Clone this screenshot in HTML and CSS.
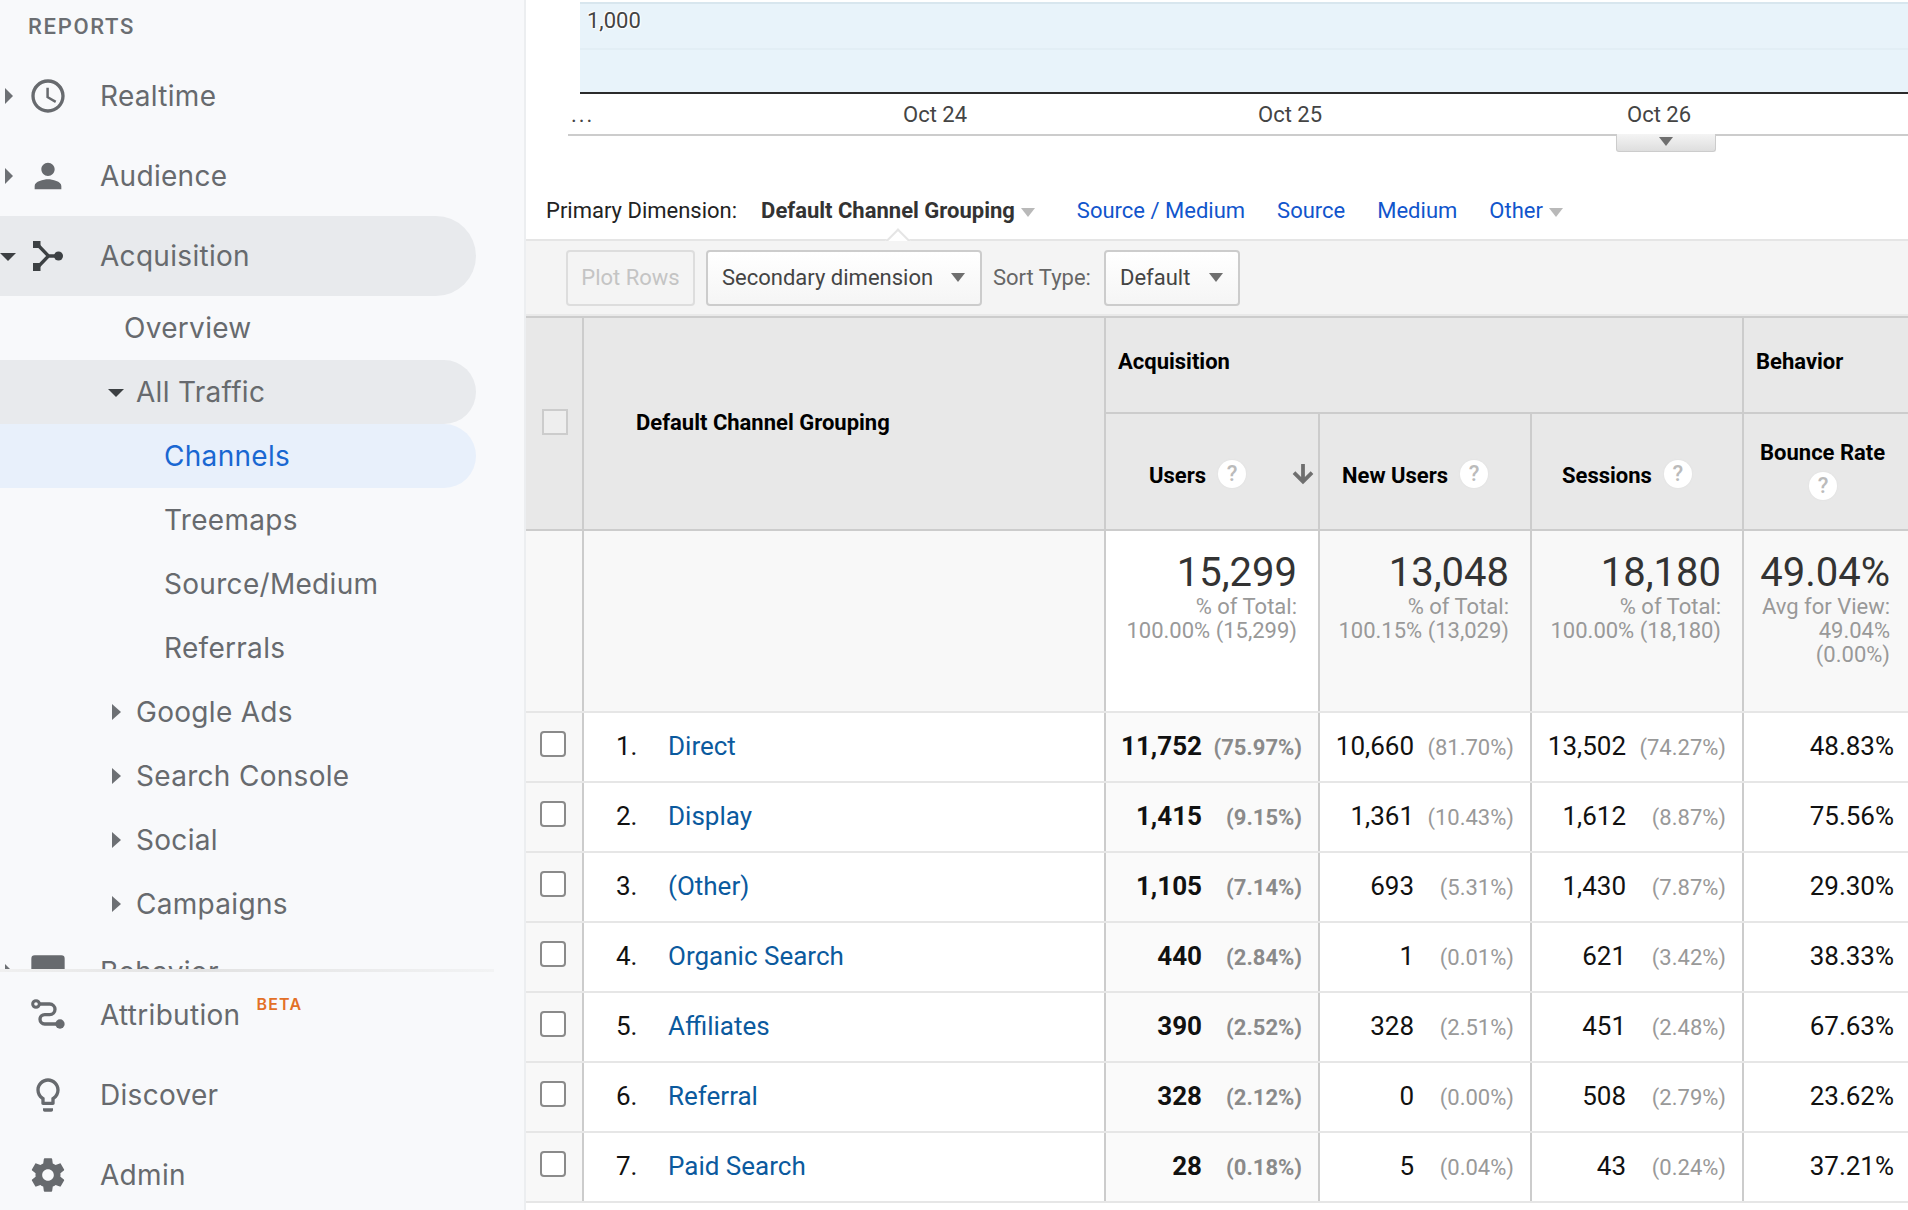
FILE: index.html
```html
<!DOCTYPE html>
<html lang="en">

<head>
    <meta charset="UTF-8">
    <title>Channels - Analytics</title>
    <link rel="stylesheet" href="styles.css">
</head>

<body>
    <aside class="sidebar">
        <nav class="nav-scroll">
            <div class="nav-title">REPORTS</div>
            <a class="nav-item"><i class="caret-right"></i>
                <svg class="nav-icon" viewBox="0 0 24 24"><path d="M11.99 2C6.47 2 2 6.48 2 12s4.47 10 9.99 10C17.52 22 22 17.52 22 12S17.52 2 11.99 2zM12 20c-4.42 0-8-3.58-8-8s3.58-8 8-8 8 3.58 8 8-3.58 8-8 8zm.5-13H11v6l5.25 3.15.75-1.23-4.5-2.67z"/></svg>
                Realtime</a>
            <a class="nav-item"><i class="caret-right"></i>
                <svg class="nav-icon" viewBox="0 0 24 24"><path d="M12 12c2.21 0 4-1.79 4-4s-1.79-4-4-4-4 1.79-4 4 1.79 4 4 4zm0 2c-2.67 0-8 1.34-8 4v2h16v-2c0-2.66-5.33-4-8-4z"/></svg>
                Audience</a>
            <a class="nav-item pill"><i class="caret-down top"></i>
                <svg class="nav-icon dark" viewBox="0 0 24 24"><path d="M3 3h4.500v4.200H3zM3 16.200h4.500V21H3z"/><path fill="none" stroke="currentColor" stroke-width="2" d="M6.500 6l5.800 6-5.800 6M12 12h5"/><circle cx="18.300" cy="12" r="2.700"/></svg>
                Acquisition</a>
            <a class="sub-item lvl-1">Overview</a>
            <a class="sub-item lvl-2 pill"><i class="caret-down"></i>All Traffic</a>
            <a class="sub-item lvl-3 active">Channels</a>
            <a class="sub-item lvl-3">Treemaps</a>
            <a class="sub-item lvl-3">Source/Medium</a>
            <a class="sub-item lvl-3">Referrals</a>
            <a class="sub-item lvl-2"><i class="caret-small"></i>Google Ads</a>
            <a class="sub-item lvl-2"><i class="caret-small"></i>Search Console</a>
            <a class="sub-item lvl-2"><i class="caret-small"></i>Social</a>
            <a class="sub-item lvl-2"><i class="caret-small"></i>Campaigns</a>
            <a class="nav-item behavior"><i class="caret-right"></i>
                <svg class="nav-icon" viewBox="0 0 24 24"><path d="M4 2h16a2 2 0 0 1 2 2v16a2 2 0 0 1-2 2H4a2 2 0 0 1-2-2V4a2 2 0 0 1 2-2z"/></svg>
                Behavior</a>
        </nav>
        <div class="nav-bottom">
            <a class="nav-item bottom">
                <svg class="nav-icon" viewBox="0 0 24 24"><path fill="none" stroke="currentColor" stroke-width="2" d="M6.500 5.400H13a3.200 3.200 0 0 1 0 6.400h-3a2.800 2.800 0 0 0 0 5.600h7"/><circle cx="4.800" cy="5.400" r="2" fill="#f8f9fb" stroke="currentColor" stroke-width="1.800"/><circle cx="19.200" cy="17.400" r="2.800"/></svg>
                Attribution<span class="beta">BETA</span></a>
            <a class="nav-item bottom">
                <svg class="nav-icon" viewBox="0 0 24 24"><path d="M9 21c0 .55.45 1 1 1h4c.55 0 1-.45 1-1v-1H9v1zm3-19C8.140 2 5 5.140 5 9c0 2.380 1.190 4.470 3 5.740V17c0 .55.450 1 1 1h6c.550 0 1-.450 1-1v-2.260c1.810-1.270 3-3.360 3-5.740 0-3.860-3.140-7-7-7zm2.850 11.100l-.850.600V16h-4v-2.300l-.850-.600C7.800 12.160 7 10.630 7 9c0-2.760 2.240-5 5-5s5 2.240 5 5c0 1.630-.800 3.160-2.150 4.100z"/></svg>
                Discover</a>
            <a class="nav-item bottom">
                <svg class="nav-icon" viewBox="0 0 24 24"><path d="M19.430 12.980c.04-.32.07-.64.07-.98s-.03-.66-.07-.98l2.110-1.650c.19-.15.24-.42.12-.64l-2-3.460c-.12-.22-.39-.30-.61-.22l-2.490 1c-.52-.40-1.080-.73-1.690-.98l-.38-2.650C14.460 2.180 14.250 2 14 2h-4c-.25 0-.46.180-.49.420l-.38 2.650c-.61.250-1.170.590-1.690.98l-2.490-1c-.23-.09-.49 0-.61.220l-2 3.460c-.13.220-.07.490.12.640l2.110 1.650c-.04.320-.07.650-.07.980s.03.660.07.980l-2.110 1.650c-.19.150-.24.420-.12.640l2 3.460c.12.220.39.300.61.220l2.490-1c.52.400 1.080.730 1.690.980l.38 2.650c.03.240.24.420.49.420h4c.25 0 .46-.180.49-.420l.38-2.650c.61-.250 1.170-.590 1.690-.980l2.490 1c.23.090.49 0 .61-.220l2-3.460c.12-.220.070-.490-.12-.640l-2.110-1.650zM12 15.500c-1.930 0-3.500-1.570-3.500-3.500s1.570-3.500 3.500-3.500 3.500 1.570 3.500 3.500-1.570 3.500-3.500 3.500z"/></svg>
                Admin</a>
        </div>
    </aside>

    <main class="main">
        <div class="chart">
            <div class="plot">
                <div class="plot-grid"></div>
                <span class="y-label">1,000</span>
            </div>
            <div class="x-axis">
                <span class="x-more">...</span>
                <span class="x-label oct24">Oct 24</span>
                <span class="x-label oct25">Oct 25</span>
                <span class="x-label oct26">Oct 26</span>
                <div class="chart-handle"><i class="tri"></i></div>
            </div>
        </div>

        <div class="tabs">
            <span class="tabs-label">Primary Dimension:</span>
            <span class="tab-current">Default Channel Grouping<i class="tri light"></i></span>
            <a class="tab-link">Source / Medium</a>
            <a class="tab-link">Source</a>
            <a class="tab-link">Medium</a>
            <a class="tab-link">Other<i class="tri light"></i></a>
        </div>

        <div class="toolbar">
            <button class="btn plot-rows">Plot Rows</button>
            <button class="btn secondary">Secondary dimension<i class="tri"></i></button>
            <span class="sort-label">Sort Type:</span>
            <button class="btn sort">Default<i class="tri"></i></button>
        </div>

        <table class="report">
            <colgroup>
                <col class="c-check">
                <col class="c-name">
                <col class="c-users">
                <col class="c-new">
                <col class="c-sessions">
                <col class="c-bounce">
            </colgroup>
            <thead>
                <tr class="head-1">
                    <th rowspan="2" class="check-cell"><span class="check head-check"></span></th>
                    <th rowspan="2" class="name-head">Default Channel Grouping</th>
                    <th colspan="3" class="group-head">Acquisition</th>
                    <th class="group-head">Behavior</th>
                </tr>
                <tr class="head-2">
                    <th class="metric users-head">Users<span class="help">?</span>
                        <svg class="sort-arrow" viewBox="0 0 24 24"><path d="M20 12l-1.410-1.410L13 16.170V4h-2v12.170l-5.580-5.590L4 12l8 8 8-8z"/></svg>
                    </th>
                    <th class="metric new-head">New Users<span class="help">?</span></th>
                    <th class="metric sessions-head">Sessions<span class="help">?</span></th>
                    <th class="metric bounce-head">Bounce Rate<span class="help">?</span></th>
                </tr>
            </thead>
            <tbody>
                <tr class="summary">
                    <td class="shade"></td>
                    <td class="shade"></td>
                    <td><b>15,299</b>% of Total:<br>100.00% (15,299)</td>
                    <td class="shade"><b>13,048</b>% of Total:<br>100.15% (13,029)</td>
                    <td class="shade"><b>18,180</b>% of Total:<br>100.00% (18,180)</td>
                    <td class="shade bounce-sum"><b>49.04%</b>Avg for View:<br>49.04%<br>(0.00%)</td>
                </tr>
                <tr class="row">
                    <td class="shade check-cell"><span class="check"></span></td>
                    <td class="name"><span class="num">1.</span><a>Direct</a></td>
                    <td class="val main-val shade-soft"><span>11,752</span><em>(75.97%)</em></td>
                    <td class="val"><span>10,660</span><em>(81.70%)</em></td>
                    <td class="val"><span>13,502</span><em>(74.27%)</em></td>
                    <td class="val rate">48.83%</td>
                </tr>
                <tr class="row">
                    <td class="shade check-cell"><span class="check"></span></td>
                    <td class="name"><span class="num">2.</span><a>Display</a></td>
                    <td class="val main-val shade-soft"><span>1,415</span><em>(9.15%)</em></td>
                    <td class="val"><span>1,361</span><em>(10.43%)</em></td>
                    <td class="val"><span>1,612</span><em>(8.87%)</em></td>
                    <td class="val rate">75.56%</td>
                </tr>
                <tr class="row">
                    <td class="shade check-cell"><span class="check"></span></td>
                    <td class="name"><span class="num">3.</span><a>(Other)</a></td>
                    <td class="val main-val shade-soft"><span>1,105</span><em>(7.14%)</em></td>
                    <td class="val"><span>693</span><em>(5.31%)</em></td>
                    <td class="val"><span>1,430</span><em>(7.87%)</em></td>
                    <td class="val rate">29.30%</td>
                </tr>
                <tr class="row">
                    <td class="shade check-cell"><span class="check"></span></td>
                    <td class="name"><span class="num">4.</span><a>Organic Search</a></td>
                    <td class="val main-val shade-soft"><span>440</span><em>(2.84%)</em></td>
                    <td class="val"><span>1</span><em>(0.01%)</em></td>
                    <td class="val"><span>621</span><em>(3.42%)</em></td>
                    <td class="val rate">38.33%</td>
                </tr>
                <tr class="row">
                    <td class="shade check-cell"><span class="check"></span></td>
                    <td class="name"><span class="num">5.</span><a>Affiliates</a></td>
                    <td class="val main-val shade-soft"><span>390</span><em>(2.52%)</em></td>
                    <td class="val"><span>328</span><em>(2.51%)</em></td>
                    <td class="val"><span>451</span><em>(2.48%)</em></td>
                    <td class="val rate">67.63%</td>
                </tr>
                <tr class="row">
                    <td class="shade check-cell"><span class="check"></span></td>
                    <td class="name"><span class="num">6.</span><a>Referral</a></td>
                    <td class="val main-val shade-soft"><span>328</span><em>(2.12%)</em></td>
                    <td class="val"><span>0</span><em>(0.00%)</em></td>
                    <td class="val"><span>508</span><em>(2.79%)</em></td>
                    <td class="val rate">23.62%</td>
                </tr>
                <tr class="row">
                    <td class="shade check-cell"><span class="check"></span></td>
                    <td class="name"><span class="num">7.</span><a>Paid Search</a></td>
                    <td class="val main-val shade-soft"><span>28</span><em>(0.18%)</em></td>
                    <td class="val"><span>5</span><em>(0.04%)</em></td>
                    <td class="val"><span>43</span><em>(0.24%)</em></td>
                    <td class="val rate">37.21%</td>
                </tr>
            </tbody>
        </table>
    </main>
</body>

</html>
```

FILE: styles.css
```css
* {
    padding: 0;
    margin: 0;
    box-sizing: border-box;
}

html,
body {
    height: 100%;
    overflow: hidden;
}

body {
    display: flex;
    height: 1210px;
    background: #fff;
    font-family: Roboto, "Liberation Sans", sans-serif;
    font-size: 22px;
    color: #333;
}

/* sidebar */
.sidebar {
    flex: 0 0 526px;
    height: 1210px;
    background: #f8f9fb;
    border-right: 2px solid #eceef0;
    font-family: Inter, Roboto, sans-serif;
    color: #676a6e;
}

.nav-scroll {
    height: 970px;
    overflow: hidden;
    padding-right: 48px;
}

.nav-title {
    height: 56px;
    padding: 13px 0 0 28px;
    font-size: 22px;
    line-height: 28px;
    font-weight: 500;
    letter-spacing: 1.7px;
    font-family: Roboto, sans-serif;
    color: #6b6e72;
}

.nav-item {
    position: relative;
    display: flex;
    align-items: center;
    height: 80px;
    padding-left: 28px;
    font-size: 28px;
    letter-spacing: 0.3px;
}

.nav-icon {
    flex: 0 0 40px;
    width: 40px;
    height: 40px;
    margin-right: 32px;
    fill: currentColor;
}

.nav-icon.dark {
    color: #3c4043;
}

.pill {
    border-radius: 0 40px 40px 0;
    background: #e8eaed;
}

.behavior {
    margin-top: -4px;
}

.sub-item {
    display: flex;
    align-items: center;
    height: 64px;
    font-size: 28px;
    letter-spacing: 0.3px;
}

.lvl-1 {
    padding-left: 124px;
}

.lvl-2 {
    padding-left: 136px;
    position: relative;
}

.lvl-3 {
    padding-left: 164px;
}

.active {
    background: #e8f0fb;
    color: #1967d2;
    border-radius: 0 32px 32px 0;
}

.caret-right,
.caret-small,
.caret-down {
    position: absolute;
    width: 0;
    height: 0;
    border-style: solid;
    border-color: transparent;
}

.caret-right {
    left: 5px;
    top: 32px;
    border-width: 8px 0 8px 8px;
    border-left-color: #6d7074;
}

.caret-small {
    left: 112px;
    top: 24px;
    border-width: 8px 0 8px 9px;
    border-left-color: #6d7074;
}

.caret-down {
    left: 108px;
    top: 29px;
    border-width: 8px 8px 0 8px;
    border-top-color: #3c4043;
}

.caret-down.top {
    left: 0;
    top: 37px;
}

.nav-bottom {
    position: relative;
    height: 240px;
    padding-top: 5px;
}

/* soft edge above the pinned items */
.nav-bottom::before {
    content: "";
    position: absolute;
    left: 0;
    top: -1px;
    width: 494px;
    height: 3px;
    background: linear-gradient(to right, #f0f0f0, #e2e2e2 40%, #f2f3f4);
}

.nav-bottom .nav-item {
    height: 80px;
}

.beta {
    align-self: flex-start;
    margin: 19px 0 0 16px;
    font-size: 16px;
    font-weight: 600;
    letter-spacing: 1.2px;
    color: #e37027;
    font-family: Inter, sans-serif;
}

/* main column */
.main {
    flex: 1;
    min-width: 0;
    overflow: hidden;
}

.chart {
    height: 136px;
    padding-left: 54px;
}

.plot {
    position: relative;
    height: 94px;
    padding-top: 2px;
    border-bottom: 2px solid #2b2b2b;
}

.plot-grid {
    height: 90px;
    background: linear-gradient(#e8f3fa 0, #e8f3fa 44px, #e2eef5 44px, #e2eef5 46px, #e8f3fa 46px);
    border-top: 2px solid #d8e6ee;
}

.y-label {
    position: absolute;
    left: 7px;
    top: 8px;
    font-size: 22px;
    line-height: 26px;
    color: #444;
    text-shadow: 0 0 2px #fff, 0 0 2px #fff, 0 0 3px #fff, 1px 1px 1px #fff, -1px -1px 1px #fff;
}

.x-axis {
    position: relative;
    height: 42px;
    margin-left: -12px;
    border-bottom: 2px solid #ccc;
}

.x-more,
.x-label {
    position: absolute;
    top: 7px;
    line-height: 28px;
    color: #444;
}

.x-more {
    left: 3px;
    letter-spacing: 2px;
}

.oct24 {
    left: 335px;
}

.oct25 {
    left: 690px;
}

.oct26 {
    left: 1059px;
}

.chart-handle {
    position: absolute;
    left: 1048px;
    top: 40px;
    width: 100px;
    height: 18px;
    border: 1px solid #ccc;
    border-top: 0;
    border-radius: 0 0 3px 3px;
    background: linear-gradient(#f4f4f4, #dedede);
    text-align: center;
    line-height: 10px;
}

.tri {
    display: inline-block;
    width: 0;
    height: 0;
    border-style: solid;
    border-width: 9px 7.5px 0 7.5px;
    border-color: #6f6f6f transparent transparent transparent;
}

.tri.light {
    border-top-color: #b9b9b9;
    margin-left: 6px;
    vertical-align: 1px;
}

.tabs {
    position: relative;
    display: flex;
    align-items: center;
    height: 105px;
    padding: 46px 0 0 20px;
    border-bottom: 2px solid #e5e5e5;
}

.tabs-label {
    color: #222;
    margin-right: 24px;
}

.tab-current {
    position: relative;
    font-weight: 700;
    color: #333;
    margin-right: 42px;
}

/* notch under the current tab */
.tab-current::after {
    content: "";
    position: absolute;
    left: 128px;
    top: 34px;
    width: 16px;
    height: 16px;
    background: #fff;
    border-left: 2px solid #e5e5e5;
    border-top: 2px solid #e5e5e5;
    transform: rotate(45deg);
}

.tab-link {
    color: #1155cc;
    margin-right: 32px;
}

.toolbar {
    position: relative;
    display: flex;
    align-items: center;
    height: 75px;
    padding-left: 40px;
    background: #f4f4f4;
    border-bottom: 2px solid #e9e9e9;
}

.btn {
    display: flex;
    align-items: center;
    justify-content: space-between;
    height: 56px;
    padding: 0 15px 0 14px;
    border: 2px solid #ccc;
    border-radius: 4px;
    background: linear-gradient(#fff, #f5f5f5);
    font: inherit;
    color: #444;
    white-space: nowrap;
}

.plot-rows {
    width: 129px;
    justify-content: center;
    padding: 0;
    background: #f4f4f4;
    border-color: #ddd;
    color: #c4c4c4;
}

.secondary {
    width: 276px;
    margin-left: 11px;
}

.sort-label {
    margin-left: 11px;
    color: #666;
}

.sort {
    width: 136px;
    margin-left: 13px;
}

/* table */
.report {
    width: 1382px;
    table-layout: fixed;
    border-collapse: collapse;
}

.c-check {
    width: 57px;
}

.c-name {
    width: 522px;
}

.c-users {
    width: 214px;
}

.c-new,
.c-sessions {
    width: 212px;
}

.c-bounce {
    width: 165px;
}

th,
td {
    border: 2px solid #ccc;
}

th {
    background: #e8e8e8;
    text-align: left;
    font-weight: 700;
    color: #000;
}

.report > thead > tr:first-child > th {
    border-top: 2px solid #ccc;
}

.report th:first-child,
.report td:first-child {
    border-left: 0;
}

.report th:last-child,
.report td:last-child {
    border-right: 0;
}

.head-1 {
    height: 96px;
}

.head-2 {
    height: 117px;
}

.group-head {
    padding-left: 12px;
    padding-bottom: 7px;
}

.name-head {
    padding: 0 0 3px 52px;
}

.check-cell {
    text-align: left;
    padding-left: 14px;
}

th.check-cell {
    padding-bottom: 3px;
}

.check {
    display: block;
    width: 26px;
    height: 26px;
    border: 2px solid #8a8a8a;
    border-radius: 4px;
    background: #fff;
}

.head-check {
    margin-left: 2px;
    border-color: #ccc;
    border-radius: 0;
    background: #eee;
}

.metric {
    position: relative;
    white-space: nowrap;
    padding-top: 5px;
}

.users-head {
    padding-left: 43px;
}

.new-head {
    padding-left: 22px;
}

.sessions-head {
    padding-left: 30px;
}

.bounce-head {
    padding: 0 0 5px 16px;
    line-height: 28px;
}

.help {
    display: inline-block;
    width: 28px;
    height: 28px;
    margin-left: 12px;
    border-radius: 50%;
    background: #fff;
    box-shadow: 0 0 2px #ddd;
    text-align: center;
    font-size: 22px;
    line-height: 28px;
    font-weight: 500;
    color: #bbb;
    vertical-align: 2px;
}

.bounce-head .help {
    display: block;
    margin: 5px 0 0 49px;
}

.sort-arrow {
    position: absolute;
    left: 183px;
    top: 46px;
    width: 28px;
    height: 28px;
    fill: #6f6f6f;
    stroke: #6f6f6f;
    stroke-width: 1.2;
}

.summary {
    height: 182px;
}

.summary td {
    padding: 19px 21px 0 0;
    vertical-align: top;
    text-align: right;
    color: #999;
    line-height: 24px;
    border-bottom-color: #e6e6e6;
}

.summary b {
    display: block;
    margin-bottom: -1px;
    font-size: 40px;
    line-height: 46px;
    font-weight: 400;
    color: #333;
}

.summary .bounce-sum {
    padding-right: 18px;
}

.shade {
    background: #f8f8f8;
}

.shade-soft {
    background: #fafafa;
}

.row {
    height: 70px;
}

.row td {
    padding-bottom: 3px;
    border-top-color: #e6e6e6;
    border-bottom-color: #e6e6e6;
    font-size: 26px;
    color: #111;
}

.row .check-cell {
    padding-left: 14px;
    padding-bottom: 6px;
}

.name {
    padding-left: 32px;
}

.num {
    display: inline-block;
    width: 52px;
}

.name a {
    color: #0b5a9e;
}

.val {
    padding-right: 16px;
    text-align: right;
    white-space: nowrap;
}

.val span {
    display: inline-block;
}

.val em {
    display: inline-block;
    width: 100px;
    text-align: right;
    font-style: normal;
    font-size: 22px;
    color: #999;
}

.main-val {
    font-weight: 700;
}

.main-val em {
    color: #8a8a8a;
}

.rate {
    padding-right: 14px;
}
```
